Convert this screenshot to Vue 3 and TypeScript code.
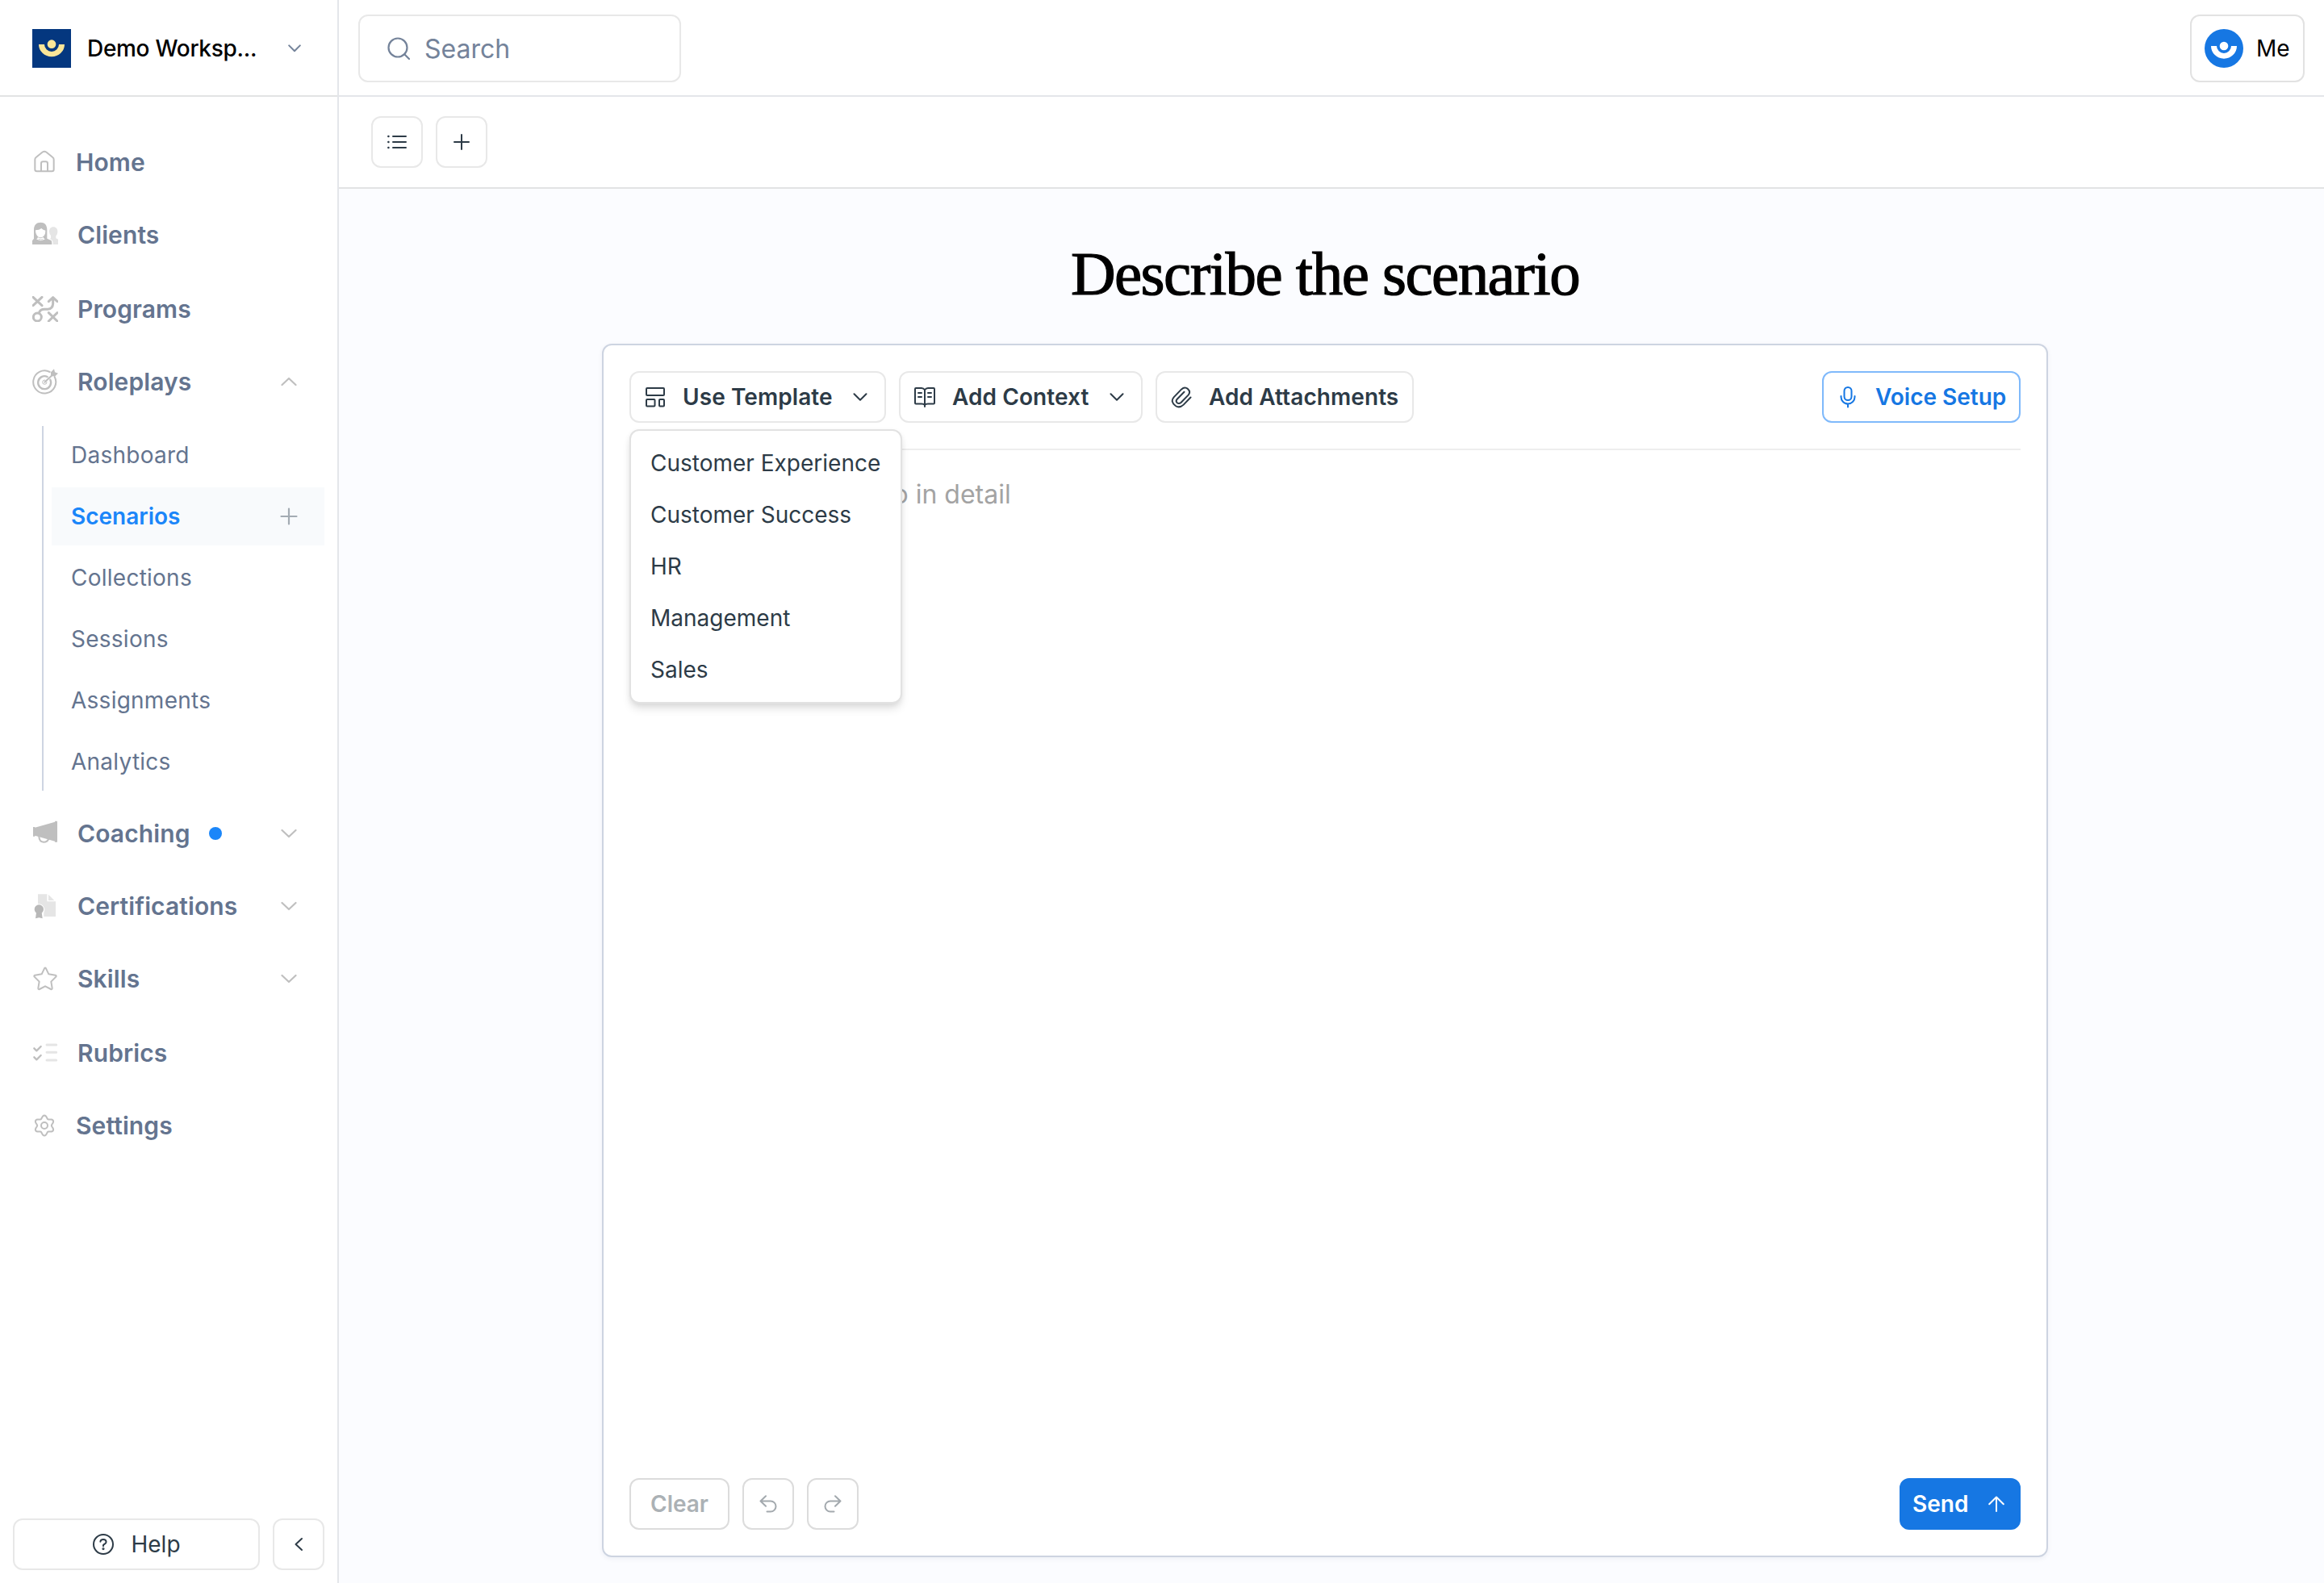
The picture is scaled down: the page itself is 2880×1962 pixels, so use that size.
<script setup lang="ts">
import { ref } from 'vue'

type IconName = 'home' | 'clients' | 'programs' | 'target' | 'megaphone' | 'certificate' | 'star' | 'checks' | 'gear'

interface NavItem {
  label: string
  icon: IconName
  box: string
  chevron?: 'up' | 'down'
  dot?: boolean
  spaced?: boolean
  compact?: boolean
  children?: string[]
}

const nav: NavItem[] = [
  { label: 'Home', icon: 'home', box: '0 0 90 96', compact: true },
  { label: 'Clients', icon: 'clients', box: '0 0 96 96' },
  { label: 'Programs', icon: 'programs', box: '0 0 96 96', spaced: true },
  {
    label: 'Roleplays',
    icon: 'target',
    box: '0 0 96 96',
    chevron: 'up',
    children: ['Dashboard', 'Scenarios', 'Collections', 'Sessions', 'Assignments', 'Analytics'],
  },
  { label: 'Coaching', icon: 'megaphone', box: '0 0 96 96', chevron: 'down', dot: true },
  { label: 'Certifications', icon: 'certificate', box: '0 0 96 96', chevron: 'down' },
  { label: 'Skills', icon: 'star', box: '0 0 96 96', chevron: 'down' },
  { label: 'Rubrics', icon: 'checks', box: '0 0 96 96', spaced: true },
  { label: 'Settings', icon: 'gear', box: '0 0 90 96', compact: true },
]

const active = ref('Scenarios')
const templates = ['Customer Experience', 'Customer Success', 'HR', 'Management', 'Sales']

// Six-lobed cog outline
const gearPath =
  Array.from({ length: 72 }, (_, i) => {
    const a = (i / 72) * Math.PI * 2
    const r = 32 + 5.5 * Math.cos(6 * (a - Math.PI / 2))
    return `${i ? 'L' : 'M'}${(45 + r * Math.cos(a)).toFixed(2)} ${(48 + r * Math.sin(a)).toFixed(2)}`
  }).join('') + 'Z'
</script>

<template>
  <div class="app">
    <aside class="sidebar">
      <div class="workspace">
        <svg class="logo" viewBox="0 0 144 144">
          <rect width="144" height="144" fill="#04377f" />
          <circle cx="72" cy="56" r="16" fill="#fbe698" />
          <path d="M24 57H45A27 27 0 0 0 99 57H120A48 46 0 0 1 24 57Z" fill="#fbe698" />
        </svg>
        <span class="workspace-name">Demo Worksp...</span>
        <svg class="workspace-chevron" viewBox="0 0 16 10"><path d="M1.2 1.4 8 8.2 14.8 1.4" /></svg>
      </div>

      <nav class="nav">
        <template v-for="item in nav" :key="item.label">
          <div class="nav-row" :class="{ spaced: item.spaced, compact: item.compact }">
            <svg class="nav-icon" :viewBox="item.box">
              <g v-if="item.icon === 'home'" class="line">
                <path d="M10 38Q10 33 14 30L38 10.500Q45 6 52 10.500L76 30Q80 33 80 38V75Q80 82 73 82H17Q10 82 10 75Z" />
                <path d="M33 81V53Q33 46 40 46H50Q57 46 57 53V81" />
              </g>
              <g v-else-if="item.icon === 'clients'" fill="#bfbfbf">
                <path d="M6 30C6 11 16 2 31 2S55 11 55 30V62L70 69Q73 71 73 84H0V70L6 62Z" />
                <path d="M12 31Q26 31 34 24Q40 31 49 32Q49 50 38 56Q31 60 23 56Q12 49 12 31Z" fill="#fff" />
                <path d="M20 57Q31 64 42 57V61L48 64Q31 75 15 64L20 61Z" fill="#fff" />
                <path d="M23 62Q31 67 40 62L37 67H25Z" />
                <path d="M78 19C89 19 95 27 94 38Q93 48 88 52V61L96 65V84H77Q77 70 72 67L66 63L69 60V51Q63 45 63 36C63 26 69 19 78 19Z" fill="#e5e5e5" />
              </g>
              <g v-else-if="item.icon === 'programs'" class="bold">
                <path d="M3 4 36 35M36 4 3 35M61 62 93 93M93 62 61 93" />
                <circle cx="19" cy="78" r="15" />
                <path d="M25 62Q30 49 45 49H58Q76 47 77 28V7M61 20 77 5 93 20" />
              </g>
              <g v-else-if="item.icon === 'target'" class="line">
                <path d="M65 12A42 42 0 1 0 83 30" />
                <path d="M56 30A24 24 0 1 0 67 41" stroke-width="7" />
                <path d="M47 42A8 8 0 1 0 54 50" stroke-width="3" />
                <path d="M46 50 78 20" stroke-width="6" />
                <path d="M69 26V13L81 1 84 13 96 17 85 28H72Z" fill="#bfbfbf" stroke="none" />
              </g>
              <g v-else-if="item.icon === 'megaphone'" fill="#bfbfbf">
                <path d="M3 24H10V26L84 5V2H93V80H84V77L10 56V59H3Z" />
                <path d="M25 60Q26 79 42 80Q57 80 61 67" fill="none" stroke="#bfbfbf" stroke-width="6" />
              </g>
              <g v-else-if="item.icon === 'certificate'">
                <path d="M21 4H55V31H87V87H43V72A22 22 0 0 0 21 40Z" fill="#e5e5e5" />
                <path d="M60 5 82 27H60Z" fill="#e5e5e5" />
                <path d="M15 72H35L38 94 25 91 12 94Z" fill="#b8b8b8" />
                <circle cx="25" cy="60" r="17" fill="#b8b8b8" />
              </g>
              <g v-else-if="item.icon === 'star'" class="line">
                <path d="M45 10Q48 5 51 10L61 31 86 35Q91 37 88 41L70 59 74 83Q74 89 69 87L48 76 27 87Q22 89 22 83L26 59 8 41Q5 37 10 35L35 31Z" />
              </g>
              <g v-else-if="item.icon === 'checks'" fill="none" stroke-linecap="round">
                <path d="M7 31 16 40 32 24M7 64 16 73 32 57" stroke="#bfbfbf" stroke-width="7" />
                <path d="M54 18H89M54 46H89M54 75H89" stroke="#e5e5e5" stroke-width="9" />
              </g>
              <g v-else class="line">
                <path :d="gearPath" />
                <circle cx="45" cy="48" r="12" />
              </g>
            </svg>
            <span class="nav-label">{{ item.label }}</span>
            <span v-if="item.dot" class="dot"></span>
            <svg v-if="item.chevron" class="nav-chevron" viewBox="0 0 20 12">
              <path v-if="item.chevron === 'up'" d="M1.500 10 10 2 18.500 10" />
              <path v-else d="M1.500 2 10 10 18.500 2" />
            </svg>
          </div>
          <div v-if="item.children" class="subnav">
            <div
              v-for="child in item.children"
              :key="child"
              class="sub-row"
              :class="{ active: child === active }"
              @click="active = child"
            >
              <span>{{ child }}</span>
              <svg v-if="child === active" class="sub-plus" viewBox="0 0 22 22"><path d="M11 1.500V20.500M1.500 11H20.500" /></svg>
            </div>
          </div>
        </template>
      </nav>

      <div class="sidebar-footer">
        <button class="btn help">
          <svg class="help-icon" viewBox="0 0 28 28">
            <circle cx="14" cy="14" r="12" />
            <path d="M10.400 10.800Q10.600 8 14 8T17.600 11Q17.600 12.900 15.600 13.700T14 16.200" />
            <circle cx="14" cy="19.600" r=".6" />
          </svg>
          <span>Help</span>
        </button>
        <button class="btn square" aria-label="Collapse">
          <svg class="i-collapse" viewBox="0 0 12 18"><path d="M10 2 2.500 9 10 16" /></svg>
        </button>
      </div>
    </aside>

    <main class="main">
      <header class="topbar">
        <div class="search">
          <svg viewBox="0 0 28 28"><circle cx="13" cy="13" r="11.500" /><path d="M21.200 21.200 27 27" /></svg>
          <span>Search</span>
        </div>
        <div class="me">
          <svg class="logo" viewBox="0 0 144 144">
            <circle cx="72" cy="72" r="72" fill="#1677e3" />
            <circle cx="72" cy="63" r="16" fill="#fff" />
            <path d="M24 63H45A27 27 0 0 0 99 63H120A48 47 0 0 1 24 63Z" fill="#fff" />
          </svg>
          <span>Me</span>
        </div>
      </header>

      <div class="toolbar">
        <button class="btn square" aria-label="List">
          <svg class="i24" viewBox="0 0 24 24">
            <path d="M7 5H23M7 12H23M7 19H23" />
            <path d="M1.300 5H1.500M1.300 12H1.500M1.300 19H1.500" stroke-width="2.400" />
          </svg>
        </button>
        <button class="btn square" aria-label="Add">
          <svg class="i20" viewBox="0 0 20 20"><path d="M10 1V19M1 10H19" /></svg>
        </button>
      </div>

      <section class="content">
        <h1>Describe the scenario</h1>
        <div class="card">
          <div class="card-tools">
            <div class="menu-anchor">
              <button class="btn tool w-template">
                <svg class="tool-icon" viewBox="0 0 28 28">
                  <rect x="3" y="3" width="22" height="9" rx="1" />
                  <rect x="3" y="17" width="10.500" height="8.500" rx="1" />
                  <rect x="19" y="17" width="6" height="8.500" rx="1" />
                </svg>
                <span>Use Template</span>
                <svg class="tool-chevron" viewBox="0 0 18 10"><path d="M1.500 1.200 9 8.700 16.500 1.200" /></svg>
              </button>
              <ul class="menu">
                <li v-for="t in templates" :key="t">{{ t }}</li>
              </ul>
            </div>
            <button class="btn tool w-context">
              <svg class="tool-icon" viewBox="0 0 28 28">
                <path d="M14 5.200Q12.500 3 10 3H3Q2 3 2 4V21.500Q2 22.500 3 22.500H10Q13 22.500 14 24Q15 22.500 18 22.500H25Q26 22.500 26 21.500V4Q26 3 25 3H18Q15.500 3 14 5.200V26" />
                <path d="M6 9H10M6 14H10M18 9H22M18 14H22" />
              </svg>
              <span>Add Context</span>
              <svg class="tool-chevron" viewBox="0 0 18 10"><path d="M1.500 1.200 9 8.700 16.500 1.200" /></svg>
            </button>
            <button class="btn tool w-attach">
              <svg class="tool-icon" viewBox="0 0 28 28">
                <path d="M25.500 14.500 16.700 23.600Q11.800 28.300 6.800 25Q-.2 19.800 4.800 14.100L14.200 4.400Q18 1 21.900 3.900Q26 7.600 22.600 11.600L13.500 21Q11 23 8.700 21.200Q6.600 18.900 8.700 16.700L17.500 7.800" />
              </svg>
              <span>Add Attachments</span>
            </button>
            <button class="btn tool voice">
              <svg class="tool-icon" viewBox="0 0 28 28">
                <rect x="9.500" y="2" width="9" height="16" rx="4.500" />
                <path d="M5.500 13V14A8.500 8.500 0 0 0 22.500 14V13M14 22.500V26.500" />
              </svg>
              <span>Voice Setup</span>
            </button>
          </div>

          <div class="editor">Describe the scenario in detail</div>

          <div class="card-footer">
            <button class="btn clear">Clear</button>
            <button class="btn square muted" aria-label="Undo">
              <svg class="i22" viewBox="0 0 22 22"><path d="M8 1.200 1.500 7.500 8 13.800M2 7.500H14A6.500 6.500 0 0 1 14 20.500H9.500" /></svg>
            </button>
            <button class="btn square muted" aria-label="Redo">
              <svg class="i22" viewBox="0 0 22 22"><path d="M14 1.200 20.500 7.500 14 13.800M20 7.500H8A6.500 6.500 0 0 0 8 20.500H12.500" /></svg>
            </button>
            <button class="btn send">
              <span>Send</span>
              <svg class="i20" viewBox="0 0 20 20"><path d="M10 1.500V19M1.200 10.300 10 1.500 18.800 10.300" /></svg>
            </button>
          </div>
        </div>
      </section>
    </main>
  </div>
</template>

<style>
body {
  background: #fff;
}
</style>

<style scoped>
* {
  box-sizing: border-box;
}
.app {
  display: flex;
  width: 2880px;
  height: 1962px;
  overflow: hidden;
  font-family: Inter, 'Liberation Sans', sans-serif;
  font-size: 28px;
  line-height: 40px;
  color: #2d3b47;
  background: #fff;
}
svg {
  display: block;
  flex: none;
  fill: none;
  stroke-linecap: round;
  stroke-linejoin: round;
}
.logo {
  width: 48px;
  height: 48px;
}

/* Sidebar */
.sidebar {
  display: flex;
  flex-direction: column;
  flex: none;
  width: 420px;
  border-right: 2px solid #e4e6ea;
}
.workspace {
  display: flex;
  align-items: center;
  height: 120px;
  padding: 2px 45px 0 40px;
  border-bottom: 2px solid #e2e3e4;
  color: #000;
  font-weight: 500;
}
.workspace-name {
  margin-left: 20px;
  letter-spacing: -0.3px;
  white-space: nowrap;
}
.workspace-chevron {
  width: 16px;
  height: 10px;
  margin-left: auto;
  stroke: #74839a;
  stroke-width: 2;
}
.nav {
  display: flex;
  flex-direction: column;
  flex: 1;
  padding-top: 36px;
}
.nav-row {
  display: flex;
  align-items: center;
  height: 90px;
  padding: 0 50px 0 40px;
  color: #64748f;
  font-size: 30px;
  font-weight: 600;
  letter-spacing: 0.1px;
}
.nav-row.spaced {
  margin-top: 2px;
}
.nav-icon {
  width: 32px;
  height: 32px;
}
.compact .nav-icon {
  width: 30px;
}
.nav-label {
  margin-left: 24px;
}
.line {
  fill: none;
  stroke: #bfbfbf;
  stroke-width: 6px;
}
.bold {
  fill: none;
  stroke: #bfbfbf;
  stroke-width: 9px;
}
.dot {
  width: 16px;
  height: 16px;
  margin-left: 23px;
  border-radius: 50%;
  background: #1b86f9;
}
.nav-chevron {
  width: 20px;
  height: 12px;
  margin-left: auto;
  stroke: #bfbfbf;
  stroke-width: 2.2;
}
.subnav {
  display: flex;
  flex-direction: column;
  gap: 4px;
  margin: 10px 16px 8px 52px;
  padding-left: 10px;
  border-left: 2px solid #ced5e2;
}
.sub-row {
  display: flex;
  align-items: center;
  justify-content: space-between;
  height: 72px;
  padding: 0 33px 0 24px;
  color: #64748f;
  letter-spacing: 0.25px;
}
.sub-row.active {
  background: #f8fafc;
  color: #1b86f9;
  font-weight: 600;
  letter-spacing: 0;
}
.sub-plus {
  width: 22px;
  height: 22px;
  stroke: #a3abb3;
  stroke-width: 2.2;
}
.sidebar-footer {
  display: flex;
  gap: 16px;
  padding: 0 16px 16px;
}

/* Buttons */
.btn {
  display: flex;
  align-items: center;
  justify-content: center;
  flex: none;
  height: 64px;
  margin: 0;
  padding: 0;
  border: 2px solid #e8e8e8;
  border-radius: 12px;
  background: #fff;
  color: #2d3b47;
  font: inherit;
}
.btn svg {
  stroke: currentColor;
  stroke-width: 2;
}
.square {
  width: 64px;
}
.help {
  flex: 1;
  gap: 20px;
}
.help-icon {
  width: 28px;
  height: 28px;
}
.i-collapse {
  width: 12px;
  height: 18px;
}
.i20 {
  width: 20px;
  height: 20px;
}
.i22 {
  width: 22px;
  height: 22px;
}
.i24 {
  width: 24px;
  height: 24px;
}

/* Main column */
.main {
  display: flex;
  flex-direction: column;
  flex: 1;
  background: #fbfcff;
}
.topbar {
  display: flex;
  align-items: center;
  justify-content: space-between;
  height: 120px;
  padding: 0 24px;
  border-bottom: 2px solid #e4e6ea;
  background: #fff;
}
.search {
  display: flex;
  align-items: center;
  gap: 18px;
  width: 400px;
  height: 84px;
  margin-top: 2px;
  padding-left: 34px;
  border: 2px solid #e8e8e8;
  border-radius: 12px;
  color: #74839a;
  font-size: 32px;
}
.search span {
  padding-top: 2px;
}
.search svg {
  width: 28px;
  height: 28px;
  stroke: #74839a;
  stroke-width: 2.2;
}
.me {
  display: flex;
  align-items: center;
  gap: 16px;
  width: 142px;
  height: 84px;
  margin-top: 2px;
  padding-left: 16px;
  border: 2px solid #e2e2e2;
  border-radius: 12px;
  color: #000;
}
.toolbar {
  display: flex;
  align-items: center;
  gap: 16px;
  height: 114px;
  padding: 0 40px;
  border-bottom: 2px solid #e2e3e4;
  background: #fff;
}
.content {
  display: flex;
  flex-direction: column;
  align-items: center;
  flex: 1;
  padding: 55px 16px 32px 0;
}
h1 {
  margin: 0 0 37px;
  color: #000;
  font-family: 'Liberation Serif', serif;
  font-size: 77px;
  font-weight: 400;
  line-height: 100px;
  letter-spacing: -1.55px;
  white-space: nowrap;
  -webkit-text-stroke: 1.2px #000;
}
.card {
  display: flex;
  flex-direction: column;
  flex: 1;
  width: 1792px;
  padding: 32px;
  border: 2px solid #cdd4e1;
  border-radius: 12px;
  background: #fff;
  box-shadow: 0 2px 6px rgba(20, 40, 80, 0.06);
}
.card-tools {
  display: flex;
  gap: 16px;
  height: 98px;
  border-bottom: 2px solid #eeeeee;
}
.menu-anchor {
  position: relative;
}
.tool {
  justify-content: flex-start;
  padding-left: 16px;
  font-weight: 600;
  letter-spacing: 0.08px;
  white-space: nowrap;
}
.tool-icon {
  width: 28px;
  height: 28px;
  margin-right: 20px;
}
.tool-chevron {
  width: 18px;
  height: 10px;
  margin-left: auto;
}
.w-template {
  width: 318px;
  padding-right: 21px;
}
.w-context {
  width: 302px;
  padding-right: 21px;
}
.w-attach {
  width: 320px;
}
.voice {
  width: 246px;
  margin-left: auto;
  border-color: #7fb9fb;
  color: #1677e3;
  letter-spacing: 0;
}
.menu {
  position: absolute;
  top: 72px;
  left: 0;
  z-index: 2;
  width: 338px;
  margin: 0;
  padding: 8px 0;
  border: 2px solid #e2e2e2;
  border-radius: 12px;
  background: #fff;
  box-shadow: 0 8px 12px -2px rgba(0, 0, 0, 0.12), 0 2px 6px rgba(0, 0, 0, 0.06);
  list-style: none;
}
.menu li {
  height: 64px;
  padding: 0 24px;
  line-height: 64px;
  white-space: nowrap;
}
.editor {
  flex: 1;
  padding: 31px 0 0 14px;
  color: #a3a3a3;
  font-size: 32px;
  line-height: 48px;
}
.card-footer {
  display: flex;
  gap: 16px;
}
.clear {
  width: 124px;
  border-color: #dcdcdc;
  color: #abb1b5;
  font-weight: 600;
}
.muted {
  border-color: #dcdcdc;
  color: #a3a9ae;
}
.send {
  justify-content: space-between;
  width: 150px;
  margin-left: auto;
  padding: 0 18px 0 14px;
  border-color: #1677e3;
  background: #1677e3;
  color: #fff;
  font-weight: 600;
}
</style>
